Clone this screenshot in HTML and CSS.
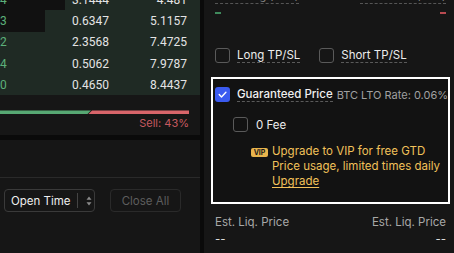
FILE: index.html
```html
<!DOCTYPE html>
<html>
<head>
<meta charset="utf-8">
<link rel="stylesheet" href="styles.css">
</head>
<body>
<div class="left">
  <div class="book">
    <div class="rows">
      <div class="row"><div class="empty" style="width:65px"></div><span class="c1">4</span><span class="c2">3.1444</span><span class="c3">4.481</span></div>
      <div class="row"><div class="empty" style="width:45px"></div><span class="c1">3</span><span class="c2">0.6347</span><span class="c3">5.1157</span></div>
      <div class="row"><span class="c1">2</span><span class="c2">2.3568</span><span class="c3">7.4725</span></div>
      <div class="row"><span class="c1">4</span><span class="c2">0.5062</span><span class="c3">7.9787</span></div>
      <div class="row"><span class="c1">0</span><span class="c2">0.4650</span><span class="c3">8.4437</span></div>
    </div>
    <div class="ratio">
      <div class="buy" style="width:91px"></div>
      <div class="sell"></div>
    </div>
    <div class="sellpct">Sell: 43%</div>
  </div>
  <div class="orders">
    <div class="tabs"></div>
    <div class="controls">
      <div class="select">
        <span class="sel-text">Open Time</span>
        <span class="sel-sep"></span>
        <svg class="sel-arrows" width="6" height="10" viewBox="0 0 6 10"><path d="M3 0.5 L5.5 3.8 H0.5 Z M3 9.5 L5.5 6.2 H0.5 Z" fill="#8a8a8a"/></svg>
      </div>
      <div class="btn-close">Close All</div>
    </div>
  </div>
</div>
<div class="right">
  <div class="maxrow">
    <span class="maxlabel">Max Long (BTC)</span>
    <span class="maxlabel">Max Short (BTC)</span>
  </div>
  <div class="dashrow">
    <span class="dash green"></span>
    <span class="dash red"></span>
  </div>
  <div class="tpsl">
    <label class="opt"><span class="cb"></span><span class="ul">Long TP/SL</span></label>
    <label class="opt"><span class="cb"></span><span class="ul">Short TP/SL</span></label>
  </div>
  <div class="gbox">
    <div class="grow">
      <span class="cb checked"><svg width="15" height="15" viewBox="0 0 15 15"><path d="M4.2 7.6 L6.5 9.9 L10.9 5.3" fill="none" stroke="#fff" stroke-width="1.4" stroke-linecap="round" stroke-linejoin="round"/></svg></span>
      <span class="gtitle ul">Guaranteed Price</span>
      <span class="grate">BTC LTO Rate: 0.06%</span>
    </div>
    <div class="frow">
      <span class="cb"></span>
      <span class="ftext">0 Fee</span>
    </div>
    <div class="vrow">
      <span class="vip">VIP</span>
      <div class="vtext">Upgrade to VIP for free GTD<br>Price usage, limited times daily<br><span class="vlink">Upgrade</span></div>
    </div>
  </div>
  <div class="liqrow">
    <span>Est. Liq. Price</span>
    <span>Est. Liq. Price</span>
  </div>
  <div class="liqval">
    <span>--</span>
    <span>--</span>
  </div>
</div>
</body>
</html>
```
FILE: styles.css
```css
html, body {
  margin: 0;
  padding: 0;
}
body {
  width: 454px;
  height: 253px;
  overflow: hidden;
  background: #0a0a0a;
  display: flex;
  gap: 4px;
  font-family: Inter, "Noto Sans", sans-serif;
  color: #e8e8e8;
  font-size: 11.5px;
  white-space: nowrap;
}
.left {
  width: 200px;
  display: flex;
  flex-direction: column;
  gap: 5px;
  flex-shrink: 0;
}
.book {
  height: 135px;
  background: #161616;
  overflow: hidden;
}
.rows {
  margin-top: -11px;
}
.row {
  position: relative;
  height: 21.3px;
  background: #1f2a24;
  display: flex;
  align-items: center;
  font-family: Roboto, Inter, sans-serif;
  font-size: 12px;
  color: #e4e4e4;
}
.empty {
  position: absolute;
  left: 0;
  top: 0;
  bottom: 0;
  background: #111111;
}
.row span {
  position: relative;
}
.c1 {
  width: 40px;
  color: #5cb07a;
}
.c2 {
  width: 69px;
  text-align: right;
}
.c3 {
  width: 78px;
  text-align: right;
}
.ratio {
  margin-top: 15px;
  width: 189px;
  height: 4px;
  display: flex;
}
.buy {
  height: 4px;
  background: #57a873;
  clip-path: polygon(0 0, 100% 0, calc(100% - 4px) 100%, 0 100%);
}
.sell {
  flex: 1;
  height: 4px;
  margin-left: -3px;
  background: #d8656a;
  clip-path: polygon(4px 0, 100% 0, 100% 100%, 0 100%);
}
.sellpct {
  width: 189px;
  text-align: right;
  margin-top: 3px;
  font-size: 11px;
  line-height: 13px;
  color: #c75a60;
}
.orders {
  flex: 1;
  background: #161616;
}
.tabs {
  height: 37px;
  border-bottom: 1px solid #2a2a2a;
}
.controls {
  margin-top: 11px;
  padding-left: 4px;
  display: flex;
  gap: 15px;
}
.select {
  width: 91px;
  height: 23px;
  box-sizing: border-box;
  border: 1px solid #3a3a3a;
  border-radius: 4px;
  display: flex;
  align-items: center;
  padding-left: 6px;
}
.sel-text {
  color: #eeeeee;
  font-size: 11.5px;
}
.sel-sep {
  width: 1px;
  height: 15px;
  background: #444;
  margin-left: 6px;
}
.sel-arrows {
  margin-left: 8px;
}
.btn-close {
  width: 71px;
  height: 23px;
  box-sizing: border-box;
  border: 1px solid #2a2a2a;
  border-radius: 4px;
  display: flex;
  align-items: center;
  justify-content: center;
  color: #5e5e5e;
  font-size: 11.5px;
}
.right {
  width: 250px;
  flex-shrink: 0;
  background: #161616;
  box-sizing: border-box;
  padding: 0 8px 0 11px;
  display: flex;
  flex-direction: column;
}
.maxrow {
  margin-top: -10px;
  display: flex;
  justify-content: space-between;
  font-size: 11px;
  line-height: 13px;
  color: #8a8a8a;
}
.maxlabel {
  border-bottom: 1px dashed #555;
}
.dashrow {
  display: flex;
  justify-content: space-between;
  margin-top: 8px;
}
.dash {
  width: 6px;
  height: 2px;
}
.dash.green { background: #3f8a5c; }
.dash.red { background: #b84a50; }
.tpsl {
  margin-top: 34px;
  display: flex;
  gap: 19px;
}
.opt {
  display: flex;
  align-items: center;
  gap: 7px;
  color: #ececec;
}
.cb {
  width: 15px;
  height: 15px;
  box-sizing: border-box;
  border: 1.5px solid #5a5a5a;
  border-radius: 3px;
  display: inline-block;
  flex-shrink: 0;
}
.cb.checked {
  border: none;
  background: #3b5bf0;
}
.cb svg {
  display: block;
}
.ul {
  border-bottom: 1px dashed #5a5a5a;
  line-height: 14px;
}
.gbox {
  margin-top: 14px;
  margin-left: -4px;
  width: 239px;
  height: 127px;
  box-sizing: border-box;
  border: 2px solid #ffffff;
  background: #121212;
  padding: 8px 0 0 2px;
}
.grow {
  display: flex;
  align-items: center;
}
.gtitle {
  margin-left: 7px;
  font-weight: 500;
  color: #f0f0f0;
}
.grate {
  margin-left: 4px;
  color: #a0a0a0;
  font-size: 11px;
}
.frow {
  margin-top: 15px;
  margin-left: 18px;
  display: flex;
  align-items: center;
  gap: 8px;
}
.ftext {
  color: #ececec;
}
.vrow {
  margin-top: 12px;
  margin-left: 36px;
  display: flex;
  align-items: flex-start;
  gap: 4px;
}
.vip {
  margin-top: 4px;
  width: 17px;
  height: 9px;
  background: #e9b44c;
  border-radius: 2px;
  color: #1a1a1a;
  font-size: 7px;
  font-weight: 700;
  line-height: 9px;
  text-align: center;
  flex-shrink: 0;
}
.vtext {
  color: #f1c15a;
  font-size: 11.5px;
  line-height: 15px;
}
.vlink {
  text-decoration: underline;
  text-underline-offset: 2px;
}
.liqrow {
  margin-top: 11px;
  display: flex;
  justify-content: space-between;
  color: #a8a8a8;
  font-size: 11.5px;
  line-height: 14px;
}
.liqval {
  margin-top: 3px;
  display: flex;
  justify-content: space-between;
  color: #dcdcdc;
  font-size: 11.5px;
  line-height: 14px;
}
```
